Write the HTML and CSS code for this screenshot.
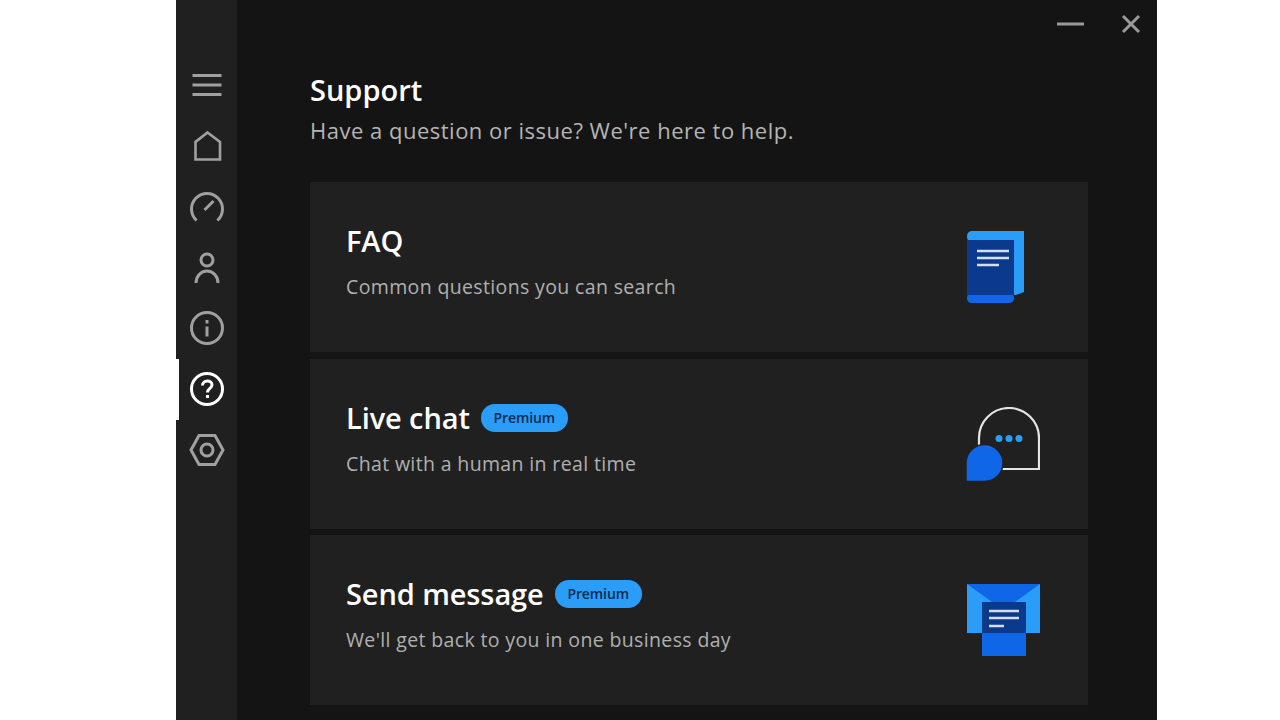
FILE: index.html
```html
<!DOCTYPE html>
<html lang="en">
<head>
<meta charset="utf-8">
<title>Support</title>
<link rel="stylesheet" href="styles.css">
</head>
<body>
<div class="app">
  <nav class="sidebar">
    <div class="nav-item"><svg class="nav-icon" viewBox="0 0 36 36"><path d="M3.500 8.500h29M3.500 18h29M3.500 27.500h29"/></svg></div>
    <div class="nav-item"><svg class="nav-icon" viewBox="0 0 36 36"><path class="thin" d="M18.500 4.500 31 14V31.500H6.500V14Z"/></svg></div>
    <div class="nav-item"><svg class="nav-icon" viewBox="0 0 36 36"><path d="M7.600 31.500A15.500 15.500 0 1 1 28.400 31.500M15.500 21 24.500 12"/></svg></div>
    <div class="nav-item"><svg class="nav-icon" viewBox="0 0 36 36"><circle cx="18" cy="10" r="6"/><path d="M7 33A11 12 0 0 1 29 33"/></svg></div>
    <div class="nav-item"><svg class="nav-icon" viewBox="0 0 36 36"><circle cx="18" cy="18" r="15.500"/><path d="M18 16.500V26.500M18 10V13.500"/></svg></div>
    <div class="nav-item active"><svg class="nav-icon" viewBox="0 0 36 36"><circle cx="18" cy="18" r="15.500"/><path d="M13.500 14.500C13.500 8.500 23 8.500 23 14C23 17.500 18.500 17.500 18.500 21.500M18.500 24V27"/></svg></div>
    <div class="nav-item"><svg class="nav-icon" viewBox="0 0 36 36"><path d="M10 3.500H26L34 18 26 32.500H10L2 18Z"/><circle cx="18" cy="18" r="6"/></svg></div>
  </nav>
  <main class="main">
    <div class="controls">
      <svg class="ctl ctl-min" viewBox="0 0 27 4"><path d="M0 2H27"/></svg>
      <svg class="ctl ctl-close" viewBox="0 0 20 20"><path d="M2 2 18 18M18 2 2 18"/></svg>
    </div>
    <header class="head">
      <h1>Support</h1>
      <p>Have a question or issue? We're here to help.</p>
    </header>
    <section class="cards">
      <article class="card">
        <div class="card-text">
          <h2>FAQ</h2>
          <p>Common questions you can search</p>
        </div>
        <svg class="card-icon" viewBox="0 0 74 74">
          <path fill="#2a9df8" d="M6 1H58V62L50 65H6Z"/>
          <rect fill="#2a9df8" x="1" y="1" width="20" height="11" rx="5"/>
          <rect fill="#0f66e6" x="1" y="63" width="47" height="10" rx="4.500"/>
          <rect fill="#0b3a8c" x="1" y="10" width="47" height="55"/>
          <path fill="none" stroke="#d5dff0" stroke-width="2.500" d="M11 21H43M11 28H43M11 35H33"/>
        </svg>
      </article>
      <article class="card">
        <div class="card-text">
          <h2>Live chat <span class="badge">Premium</span></h2>
          <p>Chat with a human in real time</p>
        </div>
        <svg class="card-icon" viewBox="0 0 74 74">
          <path fill="none" stroke="#e4e4e4" stroke-width="2.200" d="M13 62V31A30 30 0 0 1 73 31V62Z"/>
          <circle fill="#2a9df8" cx="33" cy="31.500" r="3.500"/><circle fill="#2a9df8" cx="43" cy="31.500" r="3.500"/><circle fill="#2a9df8" cx="53" cy="31.500" r="3.500"/>
          <path fill="#0f66e6" stroke="#202020" stroke-width="1.500" d="M0 74.500V56A18.500 18.500 0 1 1 18.500 74.500Z"/>
        </svg>
      </article>
      <article class="card">
        <div class="card-text">
          <h2>Send message <span class="badge">Premium</span></h2>
          <p>We'll get back to you in one business day</p>
        </div>
        <svg class="card-icon" viewBox="0 0 74 74">
          <path fill="#2a9df8" d="M1 1H74V50H1Z"/>
          <path fill="#0f66e6" d="M1 1H74L49 19H26Z"/>
          <rect fill="#0f66e6" x="16" y="49" width="44" height="24"/>
          <rect fill="#0b3a8c" x="16" y="19" width="44" height="31"/>
          <path fill="none" stroke="#d5dff0" stroke-width="2.500" d="M23 28H53M23 35H53M23 43H38"/>
        </svg>
      </article>
    </section>
  </main>
</div>
</body>
</html>
```
FILE: styles.css
```css
* { box-sizing: border-box; }
html, body { margin: 0; height: 100%; background: #fff; overflow: hidden; }
body { font-family: "Open Sans", "Noto Sans", "Liberation Sans", sans-serif; }
.app { display: flex; width: 981px; height: 720px; margin-left: 176px; background: #141414; overflow: hidden; }
.sidebar { width: 61px; flex: none; background: #202020; padding-top: 54.800px; display: flex; flex-direction: column; }
.nav-item { height: 60.800px; display: flex; align-items: center; justify-content: center; border-left: 3px solid transparent; padding-right: 3px; color: #a0a0a0; }
.nav-item.active { border-left-color: #fff; color: #fff; }
.nav-icon { width: 36px; height: 36px; fill: none; stroke: currentColor; stroke-width: 3; }
.thin { stroke-width: 2.600; }
.main { flex: 1; padding: 0 69px 0 73px; display: flex; flex-direction: column; position: relative; }
.controls { position: absolute; top: 0; right: 16px; height: 47px; display: flex; align-items: center; gap: 37px; }
.ctl { stroke: #9a9a9a; stroke-width: 3; fill: none; }
.ctl-min { width: 27px; height: 4px; }
.ctl-close { width: 20px; height: 20px; }
.head { height: 182px; padding-top: 71px; }
h1 { margin: 0; font-size: 29px; line-height: 37px; font-weight: 600; color: #fff; }
.head p { margin: 4px 0 0; font-size: 22px; line-height: 36px; color: #b4b4b4; letter-spacing: 0.5px; }
.cards { display: flex; flex-direction: column; gap: 6.500px; }
.card { height: 170px; background: #202020; display: flex; align-items: center; justify-content: space-between; padding: 0 48px 0 36px; }
.card-text { margin-top: -10px; }
h2 { margin: 0; display: flex; align-items: center; gap: 11px; font-size: 29px; line-height: 38px; font-weight: 600; color: #fff; letter-spacing: -0.1px; }
.card-text p { margin: 12px 0 0; font-size: 19.500px; line-height: 30px; color: #b0b0b0; letter-spacing: 0.36px; }
.badge { display: inline-flex; align-items: center; justify-content: center; width: 87px; height: 28px; border-radius: 14px; background: #2a9df8; color: #0c2a4d; font-size: 14px; font-weight: 600; letter-spacing: -0.1px; }
.card-icon { width: 74px; height: 74px; flex: none; }
```
